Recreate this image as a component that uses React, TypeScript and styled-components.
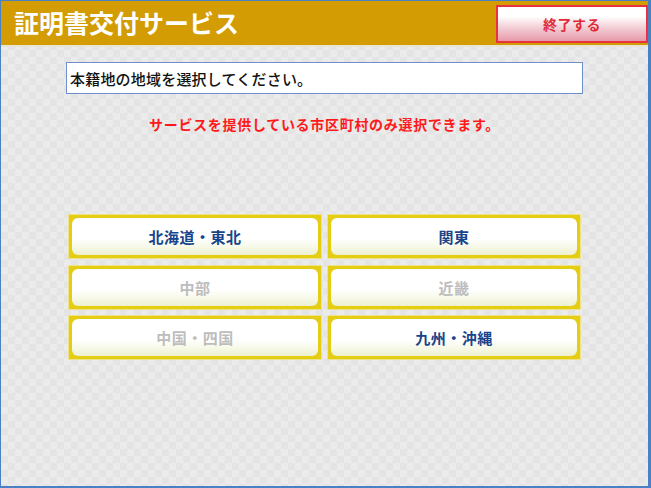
import React from "react";
import styled, { createGlobalStyle } from "styled-components";

const Global = createGlobalStyle`
  html, body { margin: 0; padding: 0; background: #fff; }
  body { font-family: "Noto Sans CJK JP", "Noto Sans", sans-serif; }
`;

const Frame = styled.div`
  width: 651px;
  height: 488px;
  box-sizing: border-box;
  border-style: solid;
  border-color: #4a80c4;
  border-width: 1px 3px 2px 1px;
  display: flex;
  flex-direction: column;
  background: repeating-conic-gradient(#e4e4e4 0 25%, #ebebeb 0 50%) 0 0 / 14px 14px;
`;

const Header = styled.header`
  height: 44px;
  flex: none;
  background: #d39c03;
  border-bottom: 2px solid #e9e4d6;
  display: flex;
  align-items: center;
  justify-content: space-between;
  padding: 0 0 0 13px;
`;

const Title = styled.h1`
  margin: 0;
  color: #fff;
  font-size: 25px;
  font-weight: 700;
  line-height: 1;
  margin-top: -2px;
`;

const ExitButton = styled.button`
  width: 152px;
  height: 38px;
  margin-top: 1px;
  box-sizing: border-box;
  border: 2px solid #e8323e;
  background: linear-gradient(#ffffff 0%, #ffffff 28%, #f2ccd4 62%, #e79aa9 100%);
  color: #e02a3a;
  font-family: inherit;
  font-size: 14px;
  font-weight: 700;
  letter-spacing: 0.5px;
  padding: 0;
  cursor: pointer;
`;

const Main = styled.main`
  flex: 1;
  display: flex;
  flex-direction: column;
  padding: 15px 0 0 65px;
`;

const Prompt = styled.div`
  width: 517px;
  height: 32px;
  box-sizing: border-box;
  background: #fff;
  border: 1px solid #6e8fcc;
  display: flex;
  align-items: center;
  padding-left: 3px;
  font-size: 15px;
  font-weight: 500;
  letter-spacing: 0.2px;
  color: #111;
`;

const Notice = styled.p`
  margin: 20px 0 0 0;
  width: 517px;
  text-align: center;
  color: #ff1a1a;
  font-size: 14px;
  font-weight: 700;
  letter-spacing: 0.7px;
  line-height: 20px;
`;

const Grid = styled.div`
  margin: 80px 0 0 2px;
  width: 514px;
  display: grid;
  grid-template-columns: 254px 254px;
  grid-template-rows: repeat(3, 45px);
  column-gap: 5px;
  row-gap: 5.5px;
`;

const RegionButton = styled.button<{ $enabled: boolean }>`
  box-sizing: border-box;
  height: 100%;
  width: 100%;
  margin: 0;
  padding: 3px;
  border: 1px solid #ede38a;
  background: #e4cd12;
  font-family: inherit;
  cursor: ${(p) => (p.$enabled ? "pointer" : "default")};
  display: flex;
  align-items: stretch;
`;

const Face = styled.span<{ $enabled: boolean }>`
  flex: 1;
  border-radius: 6px;
  background: linear-gradient(#ffffff 0%, #ffffff 55%, #f6f8e6 80%, #edf0cf 100%);
  display: flex;
  align-items: center;
  justify-content: center;
  font-size: 15px;
  font-weight: 700;
  color: ${(p) => (p.$enabled ? "#17448a" : "#bdbdbd")};
  letter-spacing: 0.5px;
`;

const regions = [
  { label: "北海道・東北", enabled: true },
  { label: "関東", enabled: true },
  { label: "中部", enabled: false },
  { label: "近畿", enabled: false },
  { label: "中国・四国", enabled: false },
  { label: "九州・沖縄", enabled: true },
];

export default function App() {
  return (
    <>
      <Global />
      <Frame>
        <Header>
          <Title>証明書交付サービス</Title>
          <ExitButton>終了する</ExitButton>
        </Header>
        <Main>
          <Prompt>本籍地の地域を選択してください。</Prompt>
          <Notice>サービスを提供している市区町村のみ選択できます。</Notice>
          <Grid>
            {regions.map((r) => (
              <RegionButton key={r.label} $enabled={r.enabled} disabled={!r.enabled}>
                <Face $enabled={r.enabled}>{r.label}</Face>
              </RegionButton>
            ))}
          </Grid>
        </Main>
      </Frame>
    </>
  );
}
